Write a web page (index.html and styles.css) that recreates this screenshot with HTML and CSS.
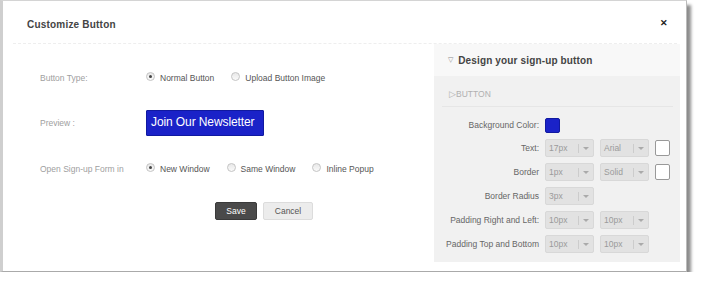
FILE: index.html
```html
<!DOCTYPE html>
<html lang="en">
<head>
  <meta charset="UTF-8">
  <title>Customize Button</title>
  <link rel="stylesheet" href="styles.css">
</head>
<body>
  <div class="dialog">
    <div class="dialog-head">
      <h1>Customize Button</h1>
      <span class="close">&#10005;</span>
    </div>

    <div class="dialog-body">
      <div class="form">
        <div class="form-row">
          <label>Button Type:</label>
          <div class="options">
            <span class="opt"><i class="radio checked"></i>Normal Button</span>
            <span class="opt"><i class="radio"></i>Upload Button Image</span>
          </div>
        </div>

        <div class="form-row preview-row">
          <label>Preview :</label>
          <span class="preview-btn">Join Our Newsletter</span>
        </div>

        <div class="form-row open-row">
          <label>Open Sign-up Form in</label>
          <div class="options">
            <span class="opt"><i class="radio checked"></i>New Window</span>
            <span class="opt"><i class="radio"></i>Same Window</span>
            <span class="opt"><i class="radio"></i>Inline Popup</span>
          </div>
        </div>

        <div class="actions">
          <button class="btn-save">Save</button>
          <button class="btn-cancel">Cancel</button>
        </div>
      </div>

      <div class="panel">
        <div class="panel-head"><span class="tri">&#9661;</span>Design your sign-up button</div>
        <div class="panel-body">
          <div class="section">&#9655;BUTTON</div>
          <div class="props">
            <span class="prop-label">Background Color:</span>
            <div class="prop color-prop"><span class="swatch"></span></div>

            <span class="prop-label">Text:</span>
            <div class="prop">
              <span class="sel">17px<b></b></span>
              <span class="sel">Arial<b></b></span>
              <span class="box"></span>
            </div>

            <span class="prop-label">Border</span>
            <div class="prop">
              <span class="sel">1px<b></b></span>
              <span class="sel">Solid<b></b></span>
              <span class="box"></span>
            </div>

            <span class="prop-label">Border Radius</span>
            <div class="prop">
              <span class="sel">3px<b></b></span>
            </div>

            <span class="prop-label">Padding Right and Left:</span>
            <div class="prop">
              <span class="sel">10px<b></b></span>
              <span class="sel">10px<b></b></span>
            </div>

            <span class="prop-label">Padding Top and Bottom</span>
            <div class="prop">
              <span class="sel">10px<b></b></span>
              <span class="sel">10px<b></b></span>
            </div>
          </div>
        </div>
      </div>
    </div>
  </div>
</body>
</html>
```

FILE: styles.css
```css
body { margin: 0; background: #fff; font-family: 'Liberation Sans', Arial, sans-serif; color: #555; }
.dialog {
  width: 687px;
  height: 272px;
  box-sizing: border-box;
  border-left: 3px solid #cfcfcf;
  border-top: 1px solid #d4d4d4;
  border-right: 1px solid #bbb;
  border-bottom: 1px solid #aaa;
  background: #fff;
  box-shadow: 4px 5px 3px rgba(0,0,0,0.45);
}
.dialog-head {
  height: 42px;
  margin: 0 9px 0 10px;
  padding: 0 14px;
  display: flex;
  align-items: center;
  justify-content: space-between;
  border-bottom: 1px dashed #eee;
}
.dialog-head h1 { margin: 0; padding-top: 5px; font-size: 10px; font-weight: bold; color: #444; letter-spacing: 0.2px; }
.close { font-size: 9px; font-weight: bold; color: #222; margin-right: -5px; padding-top: 2px; }
.dialog-body { display: flex; }
.form { width: 394px; padding: 22px 0 0 37px; }
.form-row { display: flex; align-items: center; height: 24px; }
.form-row label { width: 106px; font-size: 8.5px; color: #a0a0a0; }
.preview-row { margin-top: 21px; }
.open-row { margin-top: 22px; }
.options { display: flex; font-size: 8.5px; color: #555; }
.opt { display: flex; align-items: center; margin-right: 17px; }
.radio {
  width: 7px;
  height: 7px;
  border-radius: 50%;
  border: 1px solid #c4c4c4;
  background: linear-gradient(#e8e8e8, #fafafa);
  margin-right: 5px;
  position: relative;
  top: -2px;
}
.radio.checked::after {
  content: "";
  position: absolute;
  left: 2px;
  top: 2px;
  width: 3px;
  height: 3px;
  border-radius: 50%;
  background: #444;
}
.preview-btn {
  background: #1a22c8;
  color: #fff;
  font-size: 12px;
  padding: 0 4px;
  height: 24px;
  line-height: 23px;
  width: 108px;
  border: 1px solid #1019a0;
  border-radius: 1px;
  letter-spacing: -0.1px;
}
.actions { display: flex; gap: 6px; margin: 21px 0 0 175px; }
.actions button {
  height: 18px;
  border-radius: 2px;
  font-family: inherit;
  font-size: 8.5px;
  padding: 0;
  cursor: pointer;
}
.btn-save { width: 42px; background: #4a4a4a; color: #fff; border: 1px solid #3a3a3a; }
.btn-cancel { width: 50px; background: #ececec; color: #555; border: 1px solid #dcdcdc; }
.panel { width: 246px; height: 218px; background: #f1f1f1; }
.panel-head {
  height: 32px;
  background: #f8f8f8;
  display: flex;
  align-items: center;
  padding-left: 14px;
  font-size: 10px;
  font-weight: bold;
  color: #444;
  letter-spacing: 0.15px;
}
.tri { font-size: 7px; color: #888; font-weight: normal; margin-right: 5px; }
.panel-body { padding: 13px 7px 0 8px; }
.section {
  font-size: 8.5px;
  color: #b0b0b0;
  padding: 0 0 7px 7px;
  border-bottom: 1px solid #e6e6e6;
}
.props {
  display: grid;
  grid-template-columns: 97px auto;
  column-gap: 6px;
  row-gap: 5px;
  margin-top: 10px;
  align-items: center;
}
.prop-label { text-align: right; font-size: 8.5px; color: #666; }
.prop { display: flex; gap: 6px; align-items: center; height: 19px; }
.color-prop { height: 16px; }
.swatch { width: 15px; height: 15px; background: #1a22c8; border: 1px solid #1019a0; border-radius: 2px; box-sizing: border-box; }
.sel {
  width: 49px;
  height: 18px;
  box-sizing: border-box;
  background: #e2e2e2;
  border: 1px solid #d8d8d8;
  border-radius: 2px;
  font-size: 8.5px;
  color: #9a9a9a;
  display: flex;
  align-items: center;
  padding-left: 3px;
  position: relative;
}
.sel b {
  position: absolute;
  right: 0;
  top: 4px;
  width: 14px;
  height: 9px;
  border-left: 1px solid #ccc;
}
.sel b::after {
  content: "";
  position: absolute;
  left: 4px;
  top: 3px;
  border-left: 3px solid transparent;
  border-right: 3px solid transparent;
  border-top: 3px solid #aaa;
}
.box { width: 15px; height: 16px; box-sizing: border-box; background: #fff; border: 1px solid #999; border-radius: 2px; }
```
